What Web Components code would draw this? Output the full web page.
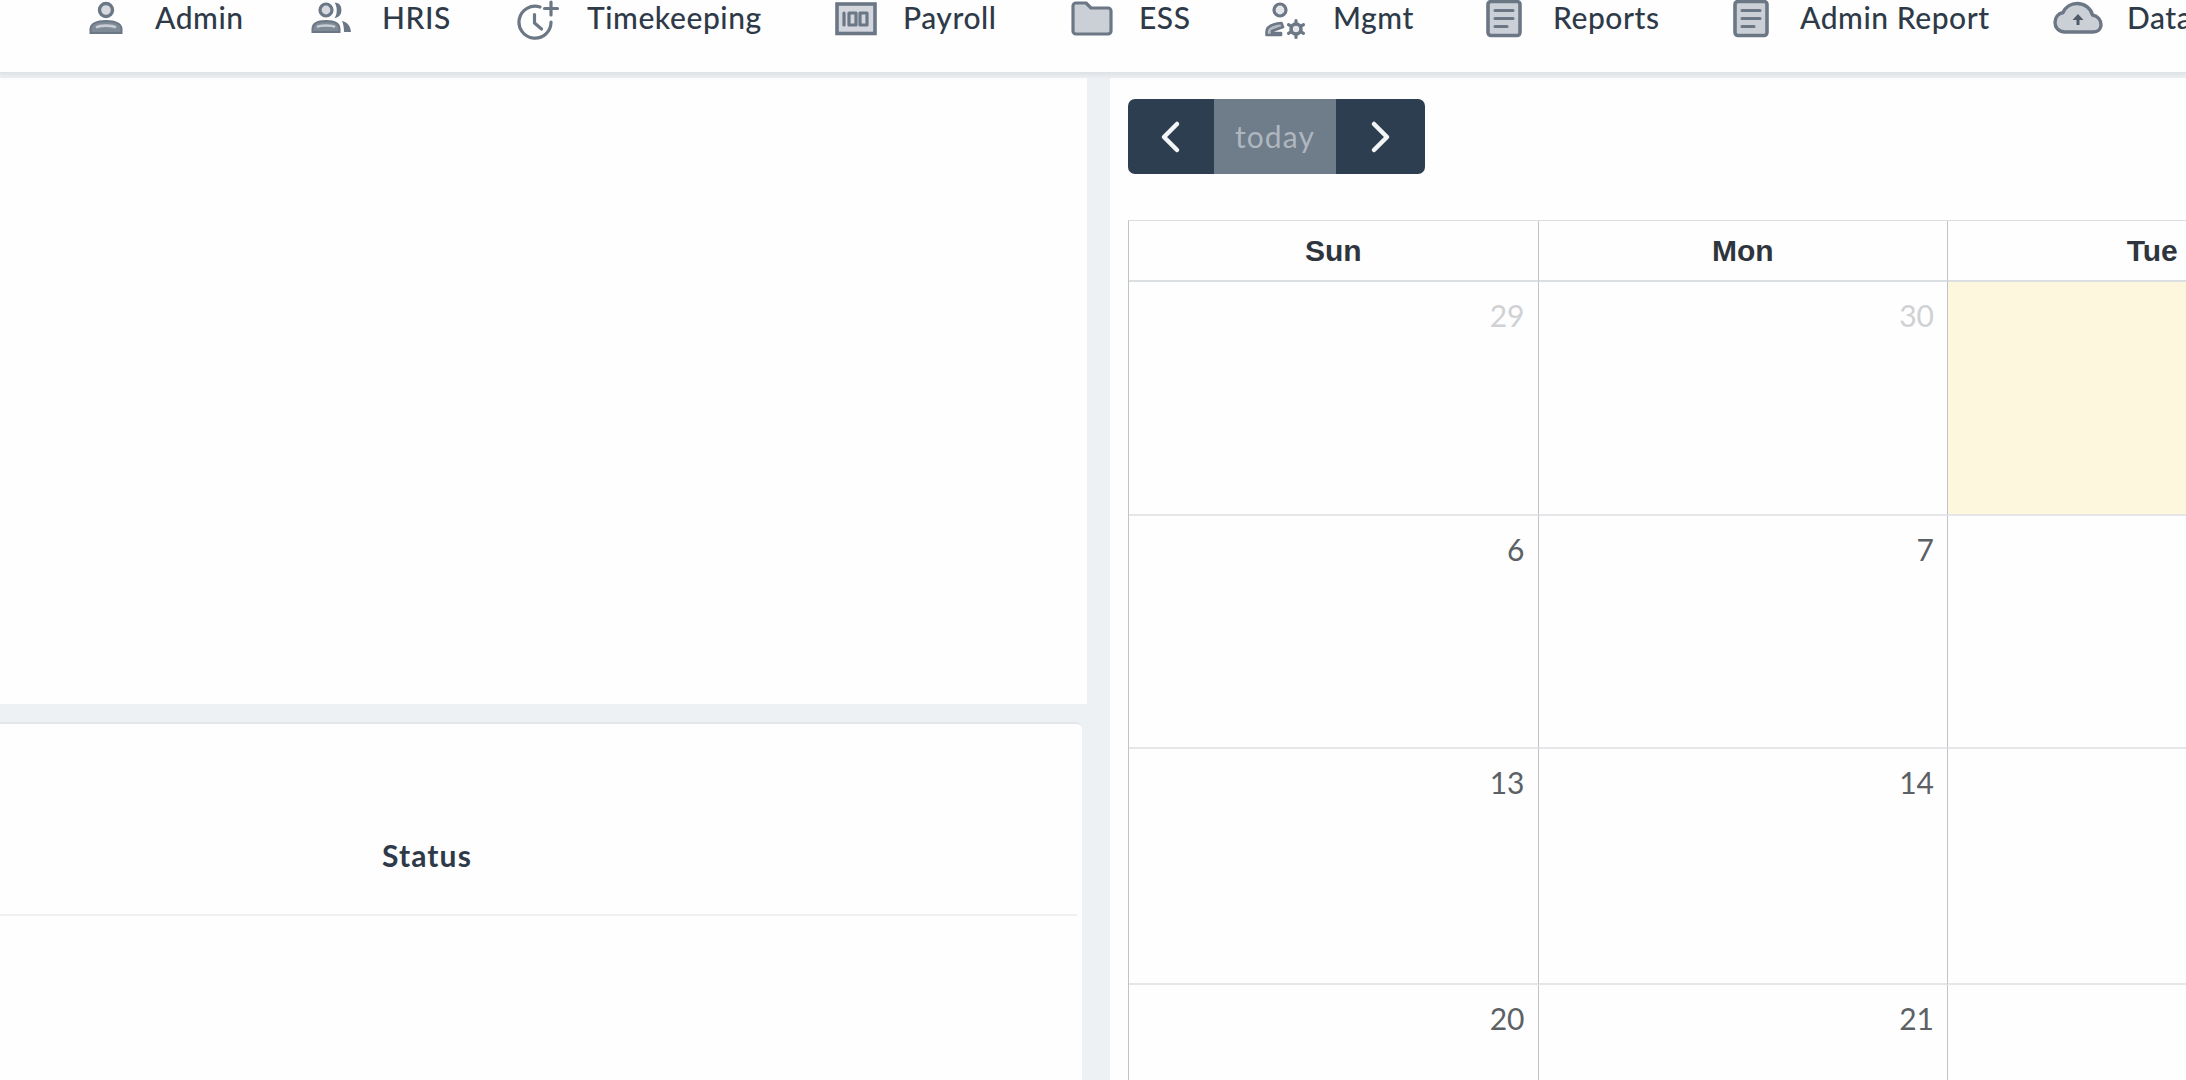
<!DOCTYPE html>
<html lang="en"><head><meta charset="utf-8"><title>Dashboard</title>
<style>
html,body{margin:0;height:1080px;overflow:hidden;background:#eef1f4;font-family:Lato,"Liberation Sans",sans-serif;color:#2e3a48}
</style></head><body>
<app-shell>
  <nav-bar slot="top">
    <nav-item icon="admin" style="--w:223px;--i:67px">Admin</nav-item>
    <nav-item icon="hris" style="--w:206px;--i:71px">HRIS</nav-item>
    <nav-item icon="time" style="--w:318px;--i:70px">Timekeeping</nav-item>
    <nav-item icon="pay" style="--w:236px;--i:68px">Payroll</nav-item>
    <nav-item icon="folder" style="--w:193px;--i:68px">ESS</nav-item>
    <nav-item icon="mgmt" style="--w:222px;--i:69px">Mgmt</nav-item>
    <nav-item icon="doc" style="--w:247px;--i:67px">Reports</nav-item>
    <nav-item icon="doc" style="--w:320px;--i:67px">Admin Report</nav-item>
    <nav-item icon="cloud" style="--w:300px;--i:74px">Data</nav-item>
  </nav-bar>
  <blank-panel slot="left"></blank-panel>
  <status-panel slot="left"></status-panel>
  <calendar-card slot="right"></calendar-card>
</app-shell>
<script>
const G='#6c7785';
const S=`stroke="${G}" stroke-width="3.2" fill="none" stroke-linecap="round" stroke-linejoin="round"`;
const F='fill="#cbd0d7"';
const ICONS={
admin:[36,`<circle cx="18" cy="10" r="6.500" fill="#d5d9df" stroke="${G}" stroke-width="3.400"/><path d="M2.500 33v-4c0-5 6-8 15.500-8s15.500 3 15.500 8v4z" fill="#7f8a97" stroke="${G}" stroke-width="2"/><path d="M8 27.500c4-2.500 16-2.500 20 0" stroke="#c8cdd5" stroke-width="2.600" fill="none"/>`],
hris:[41,`<circle cx="15" cy="10" r="6" fill="#d5d9df" stroke="${G}" stroke-width="3.200"/><path d="M25 3.500c6 1 6.500 11.500 0 13.500 2-4 2-9 0-13.500z" fill="${G}" stroke="${G}" stroke-width="1.500"/><path d="M1.500 32v-3c0-5 5-8 13.500-8s13.500 3 13.500 8v3z" fill="#7f8a97" stroke="${G}" stroke-width="2"/><path d="M6 27c3-2 15-2 18 0" stroke="#c8cdd5" stroke-width="2.500" fill="none"/><path d="M31 21c5 1 8.500 4.500 9 11h-7c0-4-.500-8-2-11z" fill="${G}"/>`],
time:[45,`<path d="M23 7A16 16 0 1 0 34 22" ${S} stroke-width="3.400"/><path d="M17.500 14.500v8.500l7 6" ${S} stroke-width="2.800"/><path d="M34 2v13M27.500 8.500h13" ${S} stroke-width="3.200"/>`],
pay:[42,`<rect x="2" y="4" width="38" height="29.500" fill="#d3d7dd" stroke="${G}" stroke-width="3.600"/><path d="M9 13v12" ${S} stroke-width="3"/><rect x="14" y="13" width="7" height="12" ${S} stroke-width="2.800"/><rect x="25" y="13" width="7" height="12" ${S} stroke-width="2.800"/>`],
folder:[42,`<path d="M2 6a3 3 0 0 1 3-3h10l5 5h17a3 3 0 0 1 3 3v20a3 3 0 0 1-3 3H5a3 3 0 0 1-3-3z" ${F} stroke="${G}" stroke-width="3.200" stroke-linejoin="round"/>`],
mgmt:[42,`<circle cx="16" cy="10" r="6" fill="#e4e6ea" stroke="${G}" stroke-width="3.200"/><path d="M2.500 35v-3c0-5 5-8 15-9l1.500 4-11 4v2l9 0v2z" fill="#b4bac3" stroke="${G}" stroke-width="2.600" stroke-linejoin="round"/><circle cx="32" cy="29" r="5" fill="#e4e6ea" stroke="${G}" stroke-width="3.600"/><path d="M32 20.500v3.500M32 34v3.500M24.500 24.700l3 1.800M36.500 31.500l3 1.800M24.500 33.300l3-1.800M36.500 26.500l3-1.800" ${S} stroke-width="3.600" stroke-linecap="butt"/>`],
doc:[36,`<rect x="2" y="1.500" width="32" height="34" rx="3" ${F} stroke="${G}" stroke-width="3.600"/><path d="M9 10.500h18M9 18.500h18M9 26.500h12" ${S} stroke-width="3"/>`],
cloud:[50,`<path d="M12 32C5 32 2 27 2 22.500c0-5 3-9 8-10C12.500 7 18 3.500 24 3.500c8 0 14 5 15.500 11.500C45 16 48 20 48 25c0 4-3 7-8 7z" ${F} stroke="${G}" stroke-width="3.400" stroke-linejoin="round"/><path d="M25 25v-8" stroke="#4f5a68" stroke-width="3" fill="none"/><path d="M19.500 20l5.500-6 5.500 6z" fill="#4f5a68"/>`]
};
class NavItem extends HTMLElement{constructor(){super();const [w,p]=ICONS[this.getAttribute('icon')];
this.attachShadow({mode:'open'}).innerHTML=`<style>:host{display:grid;grid-template-columns:var(--i) 1fr;width:var(--w);flex:none;align-items:start}
svg{display:block;height:40px;filter:blur(.4px)}.t{font-size:30px;font-weight:500;letter-spacing:.55px;line-height:34px;color:#2e3a48;white-space:nowrap}</style>
<svg width="${w}" height="40" viewBox="0 0 ${w} 40">${p}</svg><span class="t"><slot></slot></span>`}}
class NavBar extends HTMLElement{constructor(){super();this.attachShadow({mode:'open'}).innerHTML=`<style>:host{display:flex;height:72px;padding-left:88px;background:#fefefe;box-shadow:0 1px 0 #dfe3e7,0 3px 5px rgba(120,130,145,.16);position:relative;z-index:2;overflow:hidden;box-sizing:border-box}</style><slot></slot>`}}
class BlankPanel extends HTMLElement{constructor(){super();this.attachShadow({mode:'open'}).innerHTML=`<style>:host{display:block;height:626px;background:#fefefe}</style>`}}
class StatusPanel extends HTMLElement{constructor(){super();this.attachShadow({mode:'open'}).innerHTML=`<style>:host{display:block;flex:1;margin-right:5px;background:#fefefe;border-top:2px solid #e3e7eb;border-radius:0 6px 0 0}
.head{display:flex;height:190px;align-items:flex-end;border-bottom:2px solid #eef0f2;margin-right:5px}
.th{width:854px;text-align:center;font-size:30px;font-weight:700;letter-spacing:1.100px;line-height:36px;padding-bottom:41px;color:#2e3a48}</style>
<div class="head"><div class="th">Status</div></div>`}}
class CalToolbar extends HTMLElement{constructor(){super();this.attachShadow({mode:'open'}).innerHTML=`<style>:host{display:flex;width:297px;height:75px;border-radius:7px;overflow:hidden;background:#2c3e50}
.b{display:flex;align-items:center;justify-content:center}.p{width:86px}.n{width:89px}
.m{width:122px;background:#6f7c89;color:#aeb7c0;font-size:30px;letter-spacing:1.100px;padding-bottom:2px;box-sizing:border-box}
svg{width:24px;height:34px}</style>
<div class="b p"><svg viewBox="0 0 24 34"><path d="M18 4 5 17l13 13" stroke="#f4f5f7" stroke-width="4.500" fill="none" stroke-linecap="round" stroke-linejoin="round"/></svg></div>
<div class="b m">today</div>
<div class="b n"><svg viewBox="0 0 24 34"><path d="M5 4l13 13L5 30" stroke="#f4f5f7" stroke-width="4.500" fill="none" stroke-linecap="round" stroke-linejoin="round"/></svg></div>`}}
class CalCell extends HTMLElement{constructor(){super();const o=this.hasAttribute('other');
this.attachShadow({mode:'open'}).innerHTML=`<style>:host{display:block;box-sizing:border-box;border-right:1px solid #bfc4c9;border-bottom:2px solid #e4e6e8;padding:13px 13px 0 0;text-align:right;font-size:30px;line-height:40px;color:${o?'#cfd1d4':'#5c6166'};background:${this.hasAttribute('today')?'#fdf7dd':'transparent'}}</style><slot></slot>`}}
class CalHead extends HTMLElement{constructor(){super();this.attachShadow({mode:'open'}).innerHTML=`<style>:host{display:flex;align-items:center;justify-content:center;box-sizing:border-box;border-right:1px solid #bfc4c9;border-bottom:2px solid #dcdfe2;font-family:"Liberation Sans",sans-serif;font-weight:700;font-size:30px;color:#2f353d}</style><slot></slot>`}}
class CalendarCard extends HTMLElement{constructor(){super();const r=[['29','30',''],['6','7',''],['13','14',''],['20','21','']];
let cells='<cal-head>Sun</cal-head><cal-head>Mon</cal-head><cal-head>Tue</cal-head>';
r.forEach((row,i)=>row.forEach((d,j)=>{cells+=`<cal-cell ${i==0&&j<2?'other':''} ${i==0&&j==2?'today':''}>${d}</cal-cell>`}));
this.attachShadow({mode:'open'}).innerHTML=`<style>:host{display:block;height:100%;box-sizing:border-box;background:#fefefe;padding:21px 0 0 18px;overflow:hidden}
.grid{display:grid;margin-top:46px;grid-template-columns:409.500px 409.500px 409.500px;grid-template-rows:61px 234px 233px 236px 200px;border-top:1px solid #dcdfe2;border-left:1px solid #bfc4c9;width:1229px}</style>
<cal-toolbar></cal-toolbar><div class="grid">${cells}</div>`}}
class AppShell extends HTMLElement{constructor(){super();this.attachShadow({mode:'open'}).innerHTML=`<style>:host{display:block;height:1080px;overflow:hidden}
.main{display:flex;height:1002px;margin-top:6px;gap:23px}
.l{width:1087px;flex:none;display:flex;flex-direction:column;gap:18px}.r{flex:1;min-width:0;overflow:hidden}</style>
<slot name="top"></slot><div class="main"><div class="l"><slot name="left"></slot></div><div class="r"><slot name="right"></slot></div></div>`}}
for(const [n,c] of Object.entries({'nav-item':NavItem,'nav-bar':NavBar,'blank-panel':BlankPanel,'status-panel':StatusPanel,'cal-toolbar':CalToolbar,'cal-cell':CalCell,'cal-head':CalHead,'calendar-card':CalendarCard,'app-shell':AppShell}))customElements.define(n,c);
</script>
</body></html>
